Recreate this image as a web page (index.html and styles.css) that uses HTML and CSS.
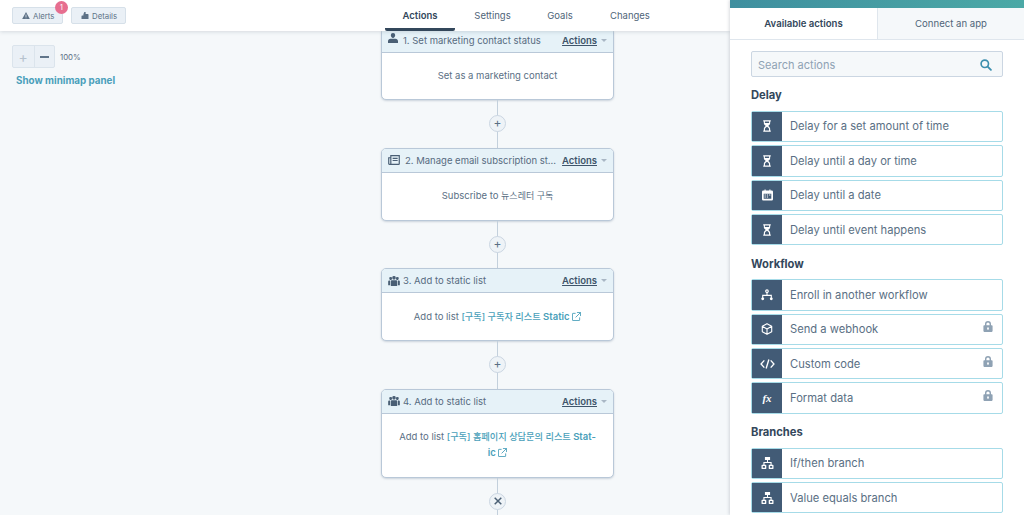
FILE: index.html
```html
<!DOCTYPE html>
<html lang="en">
<head>
<meta charset="utf-8">
<title>Workflow</title>
<link rel="stylesheet" href="styles.css">
</head>
<body>
<svg class="defs" width="0" height="0" aria-hidden="true">
  <symbol id="i-hour" viewBox="0 0 12 14"><path fill="currentColor" d="M1.500 0h9v1.600h-.7v2.200c0 1.300-1.200 2.400-2.300 3.200 1.100.8 2.300 1.900 2.300 3.200v2.200h.7V14h-9v-1.600h.7v-2.200c0-1.300 1.200-2.400 2.300-3.200C3.400 6.200 2.200 5.100 2.200 3.800V1.600h-.7zM3.500 1.600v1.700h5V1.600zM6 7.900c-1 .7-2.200 1.500-2.400 2.600v1.900h4.800v-1.900C8.200 9.400 7 8.600 6 7.900z"/></symbol>
  <symbol id="i-branch" viewBox="0 0 14 14"><path fill="currentColor" d="M4 0h6v3.500H7.600v2.200h4.200V9h1.200a1 1 0 0 1 1 1v3a1 1 0 0 1-1 1H9.400a1 1 0 0 1-1-1v-3a1 1 0 0 1 1-1h1.100V7H3.500v2h1.100a1 1 0 0 1 1 1v3a1 1 0 0 1-1 1H1a1 1 0 0 1-1-1v-3a1 1 0 0 1 1-1h1.200V5.700h4.200V3.500H4zM1.500 10.500v2h2.500v-2zM10 10.500v2h2.500v-2z"/></symbol>
  <symbol id="i-lock" viewBox="0 0 12 13"><path fill="currentColor" d="M6 0a3.600 3.600 0 0 1 3.600 3.600V5h.9a1 1 0 0 1 1 1v6a1 1 0 0 1-1 1h-9a1 1 0 0 1-1-1V6a1 1 0 0 1 1-1h.9V3.600A3.600 3.600 0 0 1 6 0zm0 1.700a1.900 1.900 0 0 0-1.900 1.900V5h3.800V3.600A1.900 1.900 0 0 0 6 1.700zM6 7.300a1.200 1.200 0 0 0-.6 2.200v1.300h1.200V9.500A1.200 1.200 0 0 0 6 7.300z"/></symbol>
  <symbol id="i-people" viewBox="0 0 14 12"><path fill="currentColor" d="M7 0a2 2 0 0 1 2 2.300c0 1-.8 2-2 2s-2-1-2-2A2 2 0 0 1 7 0zM3 1.200a1.600 1.600 0 0 1 1.500 2.200c0 .8-.6 1.500-1.500 1.500S1.500 4.200 1.500 3.400A1.600 1.600 0 0 1 3 1.200zm8 0a1.600 1.600 0 0 1 1.500 2.200c0 .8-.6 1.500-1.500 1.500s-1.500-.7-1.500-1.500A1.600 1.600 0 0 1 11 1.200zM4.500 5.200h5c.8 0 1.300.6 1.300 1.300V12H3.200V6.500c0-.7.500-1.300 1.300-1.300zM0 6.500c0-.6.500-1 1-1h1.400V11H0zm11.600-1H13c.5 0 1 .4 1 1V11h-2.400z"/></symbol>
  <symbol id="i-ext" viewBox="0 0 10 10"><path fill="none" stroke="currentColor" stroke-width="1" d="M4 1.500H1a.5.5 0 0 0-.5.5v7a.5.5 0 0 0 .5.5h7a.5.5 0 0 0 .5-.5V6M5.500.5h4v4M9.500.5 4 6"/></symbol>
</svg>
<div class="app">
  <main class="main">
    <header class="topbar">
      <div class="top-left">
        <button class="chip chip-alerts">
          <svg class="chip-icon" viewBox="0 0 12 11"><path fill="currentColor" d="M6 0l6 11H0zM5.400 4v3.800h1.200V4zm0 4.600v1.200h1.200V8.600z"/></svg>
          Alerts<span class="badge">1</span>
        </button>
        <button class="chip chip-details">
          <svg class="chip-icon" viewBox="0 0 12 11"><path fill="currentColor" d="M5 0h2v3h3.500a1 1 0 0 1 1 1v7H.5V6.500a1 1 0 0 1 1-1H3.500V3.500z"/></svg>
          Details
        </button>
      </div>
      <nav class="tabs">
        <span class="tab tab-active">Actions</span>
        <span class="tab tab-settings">Settings</span>
        <span class="tab tab-goals">Goals</span>
        <span class="tab tab-changes">Changes</span>
      </nav>
    </header>
    <section class="canvas">
      <div class="zoom-tools">
        <div class="zoom-row">
          <div class="zoom-group">
            <span class="zoom-btn zoom-plus">+</span>
            <span class="zoom-btn zoom-minus"><i class="minus-bar"></i></span>
          </div>
          <span class="zoom-val">100%</span>
        </div>
        <a class="minimap-link">Show minimap panel</a>
      </div>
      <div class="flow">
        <article class="card">
          <div class="card-head">
            <svg class="head-icon head-person" viewBox="0 0 12 12"><path fill="currentColor" d="M6 0a2.600 2.600 0 0 1 2.600 2.800C8.600 4.500 7.500 6 6 6S3.400 4.500 3.400 2.800A2.600 2.600 0 0 1 6 0zM3 7h6c1.700 0 3 1.200 3 3v2H0v-2c0-1.800 1.300-3 3-3z"/></svg>
            <span class="head-title">1. Set marketing contact status</span>
            <span class="head-actions">Actions</span><span class="caret"></span>
          </div>
          <div class="card-body body-short">Set as a marketing contact</div>
        </article>
        <div class="link link-first"><span class="node">+</span></div>
        <article class="card">
          <div class="card-head">
            <svg class="head-icon head-news" viewBox="0 0 13 11"><path fill="none" stroke="currentColor" stroke-width="1.300" d="M3 .7h9.300v8.800a.8.800 0 0 1-.8.800H1.500a.8.800 0 0 1-.8-.8V3H3zM3 .7v9.500"/><path fill="currentColor" d="M5 3h5.500v1.300H5zm0 2.500h5.500v1.200H5z"/></svg>
            <span class="head-title">2. Manage email subscription st...</span>
            <span class="head-actions">Actions</span><span class="caret"></span>
          </div>
          <div class="card-body body-mid"><span>Subscribe to <span class="ko">뉴스레터 구독</span></span></div>
        </article>
        <div class="link"><span class="node">+</span></div>
        <article class="card">
          <div class="card-head">
            <svg class="head-icon head-people"><use href="#i-people"/></svg>
            <span class="head-title">3. Add to static list</span>
            <span class="head-actions">Actions</span><span class="caret"></span>
          </div>
          <div class="card-body body-mid">
            <span>Add to list <b class="list-link"><span class="ko ko-link">[구독] 구독자 리스트</span> Static</b> <svg class="ext"><use href="#i-ext"/></svg></span>
          </div>
        </article>
        <div class="link"><span class="node">+</span></div>
        <article class="card">
          <div class="card-head">
            <svg class="head-icon head-people"><use href="#i-people"/></svg>
            <span class="head-title">4. Add to static list</span>
            <span class="head-actions">Actions</span><span class="caret"></span>
          </div>
          <div class="card-body body-tall">
            <span>Add to list <b class="list-link"><span class="ko ko-link">[구독] 홈페이지 상담문의 리스트</span> Stat-<br>ic</b> <svg class="ext"><use href="#i-ext"/></svg></span>
          </div>
        </article>
        <div class="link"><span class="node node-x"><svg viewBox="0 0 8 8" class="x-icon"><path stroke="currentColor" stroke-width="1.500" d="M.7.7l6.600 6.600M7.300.7.700 7.300"/></svg></span></div>
      </div>
    </section>
  </main>
  <aside class="side">
    <div class="side-bar"></div>
    <div class="side-tabs">
      <span class="side-tab side-tab-on">Available actions</span>
      <span class="side-tab">Connect an app</span>
    </div>
    <div class="side-content">
      <div class="search">
        <span class="search-text">Search actions</span>
        <svg class="search-icon" viewBox="0 0 13 13"><circle cx="5.200" cy="5.200" r="4" fill="none" stroke="currentColor" stroke-width="1.800"/><path stroke="currentColor" stroke-width="2" stroke-linecap="round" d="M8.300 8.300l3.500 3.500"/></svg>
      </div>
      <h3 class="group-title">Delay</h3>
      <ul class="rows">
        <li class="row"><span class="row-icon"><svg class="ri ri-hour"><use href="#i-hour"/></svg></span><span class="row-text">Delay for a set amount of time</span></li>
        <li class="row"><span class="row-icon"><svg class="ri ri-hour"><use href="#i-hour"/></svg></span><span class="row-text">Delay until a day or time</span></li>
        <li class="row"><span class="row-icon"><svg class="ri ri-cal" viewBox="0 0 13 13"><path fill="currentColor" d="M3 0h1.300v1.200h4.400V0H10v1.200h1.500A1.500 1.500 0 0 1 13 2.700v8.800a1.500 1.500 0 0 1-1.500 1.500h-10A1.500 1.500 0 0 1 0 11.500V2.700a1.500 1.500 0 0 1 1.500-1.500H3zM2 5v6h9V5z"/><path fill="currentColor" d="M3 6h1.500v1.200H3zm2.700 0h1.500v1.200H5.700zm2.700 0h1.500v1.200H8.400zM3 8.300h1.500v1.200H3zm2.700 0h1.500v1.200H5.700z"/></svg></span><span class="row-text">Delay until a date</span></li>
        <li class="row"><span class="row-icon"><svg class="ri ri-hour"><use href="#i-hour"/></svg></span><span class="row-text">Delay until event happens</span></li>
      </ul>
      <h3 class="group-title">Workflow</h3>
      <ul class="rows">
        <li class="row"><span class="row-icon"><svg class="ri ri-enroll" viewBox="0 0 14 13"><circle cx="7" cy="2" r="1.500" fill="none" stroke="currentColor" stroke-width="1.300"/><path fill="none" stroke="currentColor" stroke-width="1.300" d="M7 3.500V7M2 10V7h10v3"/><circle cx="2" cy="11" r="1.700" fill="currentColor"/><circle cx="12" cy="11" r="1.700" fill="currentColor"/></svg></span><span class="row-text">Enroll in another workflow</span></li>
        <li class="row"><span class="row-icon"><svg class="ri ri-cube" viewBox="0 0 14 14"><path fill="none" stroke="currentColor" stroke-width="1.300" stroke-linejoin="round" d="M7 .8l5.500 3.100v6.200L7 13.200l-5.500-3.100V3.900zM1.500 3.900 7 7l5.500-3.100M7 7v6.200"/></svg></span><span class="row-text">Send a webhook</span><svg class="lock"><use href="#i-lock"/></svg></li>
        <li class="row"><span class="row-icon"><svg class="ri ri-code" viewBox="0 0 16 11"><path fill="none" stroke="currentColor" stroke-width="1.500" d="M4.500 1.500.9 5.500l3.600 4M11.500 1.500l3.600 4-3.600 4M9.500.5l-3 10"/></svg></span><span class="row-text">Custom code</span><svg class="lock"><use href="#i-lock"/></svg></li>
        <li class="row"><span class="row-icon"><i class="fx">fx</i></span><span class="row-text">Format data</span><svg class="lock"><use href="#i-lock"/></svg></li>
      </ul>
      <h3 class="group-title">Branches</h3>
      <ul class="rows">
        <li class="row"><span class="row-icon"><svg class="ri ri-branch"><use href="#i-branch"/></svg></span><span class="row-text">If/then branch</span></li>
        <li class="row"><span class="row-icon"><svg class="ri ri-branch"><use href="#i-branch"/></svg></span><span class="row-text">Value equals branch</span></li>
      </ul>
    </div>
  </aside>
</div>
</body>
</html>
```
FILE: styles.css
```css
* { box-sizing: border-box; }
html, body { margin: 0; padding: 0; height: 100%; overflow: hidden; }
body {
  font-family: "Inter", "Noto Sans CJK KR", sans-serif;
  font-size: 9.500px;
  color: #5a6f84;
  background: #f5f8fa;
}
.defs { position: absolute; }
.app { display: flex; width: 1024px; height: 515px; overflow: hidden; }

.main { position: relative; width: 730px; height: 515px; flex: none; }
.topbar {
  position: relative;
  z-index: 3;
  height: 31px;
  background: #fff;
  box-shadow: 0 1px 4px rgba(45, 62, 80, .16);
}
.top-left { display: flex; gap: 8px; padding: 7px 0 0 12px; }
.chip {
  position: relative;
  display: flex;
  align-items: center;
  gap: 3.500px;
  height: 17px;
  padding: 0 0 0 8.500px;
  border: 1px solid #d6e0e9;
  border-radius: 2px;
  background: #eaf0f6;
  color: #5f7488;
  font: inherit;
  font-size: 7.800px;
}
.chip-icon { width: 8px; height: 7px; color: #5d7186; }
.chip-alerts { width: 51px; }
.chip-details { width: 55px; }
.badge {
  position: absolute;
  top: -7px;
  right: -6px;
  width: 13px;
  height: 13px;
  border-radius: 50%;
  background: #e66e8f;
  color: #fff;
  font-size: 7px;
  line-height: 13px;
  text-align: center;
}
.tabs { position: absolute; top: 0; left: 385px; height: 31px; display: flex; }
.tab { height: 31px; padding-top: 10px; font-size: 9.500px; color: #4f6579; text-align: center; }
.tab-active { width: 70px; font-weight: 600; color: #33475b; border-bottom: 3px solid #33475b; border-radius: 0 0 2px 2px; }
.tab-settings { margin-left: 19px; width: 37px; }
.tab-goals { margin-left: 36px; width: 26px; }
.tab-changes { margin-left: 37px; width: 39px; }

.canvas {
  position: relative;
  height: 484px;
  overflow: hidden;
  background-color: #f5f8fa;
  background-image: radial-gradient(#f0f3f7 .6px, transparent .7px);
  background-size: 4px 4px;
}
.zoom-tools { position: absolute; top: 14px; left: 12px; z-index: 2; }
.zoom-row { display: flex; align-items: center; gap: 5px; }
.zoom-group { display: flex; height: 23px; border: 1px solid #dbe4ec; border-radius: 2px; background: #eaf0f6; }
.zoom-btn { display: flex; align-items: center; justify-content: center; width: 20.500px; font-size: 14px; color: #b6c2ce; }
.zoom-minus { border-left: 1px solid #dbe4ec; }
.minus-bar { display: block; width: 9px; height: 2px; background: #60758a; }
.zoom-val { font-size: 7.800px; color: #5a6f84; }
.minimap-link { display: block; margin: 7px 0 0 4px; font-size: 9.800px; font-weight: 700; color: #4a9fba; }

.flow { position: absolute; top: -3px; left: 381px; width: 233px; display: flex; flex-direction: column; }
.card {
  border: 1px solid #b9c8d8;
  border-radius: 5px;
  background: #fff;
  box-shadow: 0 1px 2px rgba(80, 105, 130, .25);
}
.card-head {
  display: flex;
  align-items: center;
  height: 24px;
  padding: 0 6px;
  background: #e6f2f8;
  border-bottom: 1px solid #b9c8d8;
  border-radius: 4px 4px 0 0;
  color: #566b80;
}
.head-icon { flex: none; color: #4a5f75; margin-right: 3px; }
.head-person { width: 10px; height: 10px; margin: -5px 5px 0 0; }
.head-news { width: 12px; height: 10px; margin: 0 5px 0 0; }
.head-people { width: 12px; height: 10px; }
.head-title { flex: 1; min-width: 0; white-space: nowrap; }
.head-actions { font-weight: 600; color: #3f556b; text-decoration: underline; margin-right: 4px; }
.caret { width: 0; height: 0; border: 3px solid transparent; border-top-color: #a9b7c5; border-bottom: 0; }
.card-body { display: flex; align-items: center; justify-content: center; text-align: center; line-height: 16px; color: #5a6f84; }
.body-short { height: 46px; }
.body-mid { height: 47px; }
.body-tall { height: 63px; }
.ko { font-size: 9px; font-weight: 400; }
.ko-link { font-size: 9.200px; font-weight: 500; }
.list-link { font-weight: 600; color: #4a9fba; }
.ext { width: 9px; height: 9px; color: #4a9fba; vertical-align: -1px; }

.link { width: 1px; height: 47.500px; margin-left: 116px; background: #c3d0dc; display: flex; align-items: center; justify-content: center; }
.link-first { height: 47.500px; }
.node {
  flex: none;
  width: 17px;
  height: 17px;
  border: 1px solid #cbd6e2;
  border-radius: 50%;
  background: #eef3f7;
  color: #5a6f84;
  font-size: 12px;
  line-height: 14px;
  text-align: center;
}
.node-x { display: flex; align-items: center; justify-content: center; }
.x-icon { width: 8px; height: 8px; color: #4c6176; }

.side {
  width: 294px;
  height: 515px;
  flex: none;
  position: relative;
  z-index: 4;
  background: #fff;
  box-shadow: -1px 0 3px rgba(45, 62, 80, .18);
}
.side-bar { height: 8px; background: linear-gradient(90deg, #3f8f9f, #4ba9a6); }
.side-tabs { display: flex; height: 32px; }
.side-tab {
  flex: 1;
  display: flex;
  align-items: center;
  justify-content: center;
  background: #f5f8fa;
  border-bottom: 1px solid #dfe6ed;
  border-left: 1px solid #dfe6ed;
  font-size: 9.600px;
  color: #4f6579;
}
.side-tab-on { flex: none; width: 147px; background: #fff; border: 0; border-bottom: 1px solid #dfe6ed; font-weight: 600; color: #33475b; }
.side-content { padding: 11px 21px 0; }
.search {
  display: flex;
  align-items: center;
  justify-content: space-between;
  height: 26px;
  padding: 1px 10px 0 6px;
  border: 1px solid #cbd6e2;
  border-radius: 2px;
  background: #f5f8fa;
}
.search-text { font-size: 11px; color: #8fa2b4; }
.search-icon { width: 12px; height: 12px; color: #3c8fae; }
.group-title { margin: 12.300px 0 8.500px; font-size: 11.200px; line-height: 13px; font-weight: 700; color: #33475b; }
.rows { list-style: none; margin: 0; padding: 0; display: flex; flex-direction: column; gap: 3px; }
.row {
  display: flex;
  align-items: center;
  height: 31.400px;
  border: 1px solid #a6dbe8;
  border-radius: 2px;
  background: #fff;
}
.row-icon {
  flex: none;
  display: flex;
  align-items: center;
  justify-content: center;
  width: 30px;
  height: 100%;
  background: #425b76;
  color: #fff;
}
.row-text { flex: 1; padding-left: 8px; font-size: 11.200px; color: #5a6f84; }
.ri { display: block; }
.ri-hour { width: 10px; height: 12px; }
.ri-cal { width: 11px; height: 12px; }
.ri-enroll { width: 12px; height: 12px; }
.ri-cube { width: 12px; height: 12px; }
.ri-code { width: 15px; height: 10px; }
.ri-branch { width: 13px; height: 12px; }
.fx { font-family: "Liberation Serif", serif; font-size: 11px; font-style: italic; font-weight: 700; }
.lock { flex: none; width: 10px; height: 11px; margin-right: 9px; margin-top: -5px; color: #8fa2b4; }
```
